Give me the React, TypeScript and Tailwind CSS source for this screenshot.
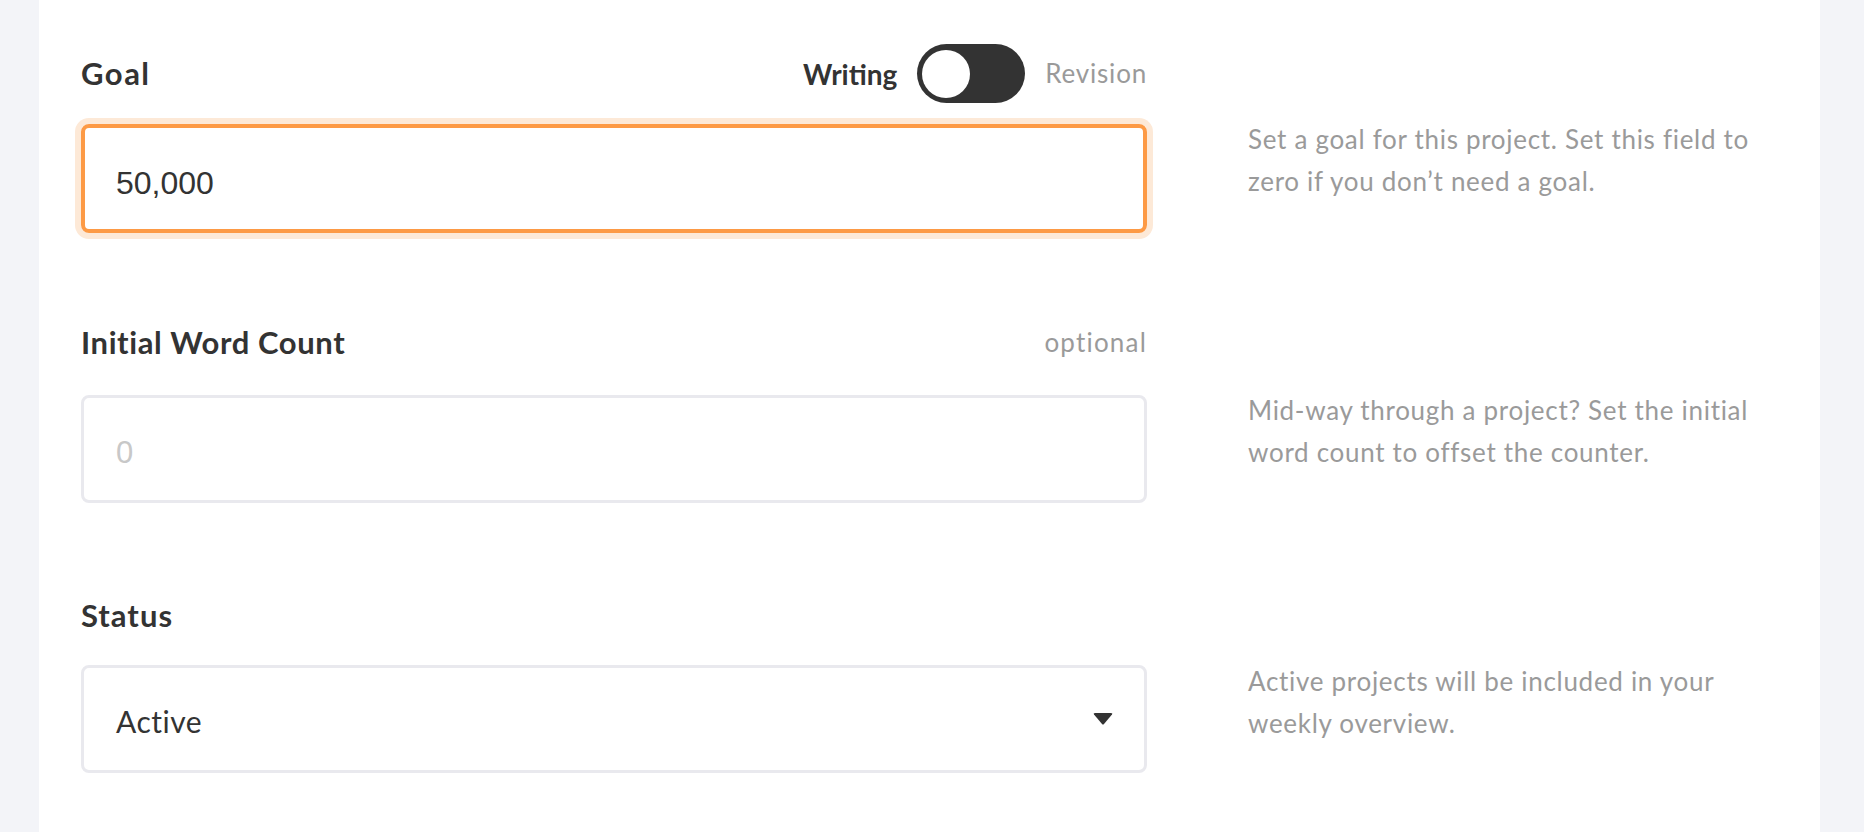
export default function App() {
  return (
    <div className="min-h-screen bg-[#f3f4f8] font-[family-name:Lato,sans-serif] text-[#333333]">
      <div className="ml-[39px] w-[1781px] min-h-[832px] bg-white pl-[42px] pr-[42px] pt-[44px] pb-[60px]">
        {/* Goal */}
        <div className="flex">
          <div className="w-[1066px]">
            <div className="flex h-[59px] items-center justify-between">
              <span className="text-[31px] font-bold tracking-[1.5px]">Goal</span>
              <div className="flex items-center gap-[20px]">
                <span className="text-[28px] font-bold">Writing</span>
                <button className="flex h-[59px] w-[108px] items-center rounded-full bg-[#333333] px-[5px]">
                  <span className="h-[48px] w-[48px] rounded-full bg-white" />
                </button>
                <span className="text-[26px] tracking-[0.8px] text-[#9a9a9a]">Revision</span>
              </div>
            </div>
            <div className="mt-[21px] flex h-[109px] items-center rounded-[8px] border-[4px] border-[#fd9a45] pl-[31px] pt-[8px] ring-[6px] ring-[#fde9d7]">
              <span className="font-[family-name:'Liberation_Sans',Arial,sans-serif] text-[32px] text-[#333333]">50,000</span>
            </div>
          </div>
          <p className="ml-[101px] w-[530px] pt-[74px] text-[26px] leading-[42px] tracking-[0.7px] text-[#9a9a9a]">
            Set a goal for this project. Set this field to zero if you don’t need a goal.
          </p>
        </div>

        {/* Initial Word Count */}
        <div className="mt-[80px] flex">
          <div className="w-[1066px]">
            <div className="flex h-[59px] items-center justify-between">
              <span className="text-[31px] font-bold tracking-[0.6px]">Initial Word Count</span>
              <span className="text-[26px] tracking-[1.2px] text-[#9a9a9a]">optional</span>
            </div>
            <div className="mt-[23px] flex h-[108px] items-center rounded-[8px] border-[3px] border-[#e9e9ee] pl-[32px] pt-[8px]">
              <span className="font-[family-name:'Liberation_Sans',Arial,sans-serif] text-[31px] text-[#c8c8c8]">0</span>
            </div>
          </div>
          <p className="ml-[101px] w-[530px] pt-[76px] text-[26px] leading-[42px] tracking-[0.7px] text-[#9a9a9a]">
            Mid-way through a project? Set the initial word count to offset the counter.
          </p>
        </div>

        {/* Status */}
        <div className="mt-[83px] flex">
          <div className="w-[1066px]">
            <div className="flex h-[59px] items-center">
              <span className="text-[31px] font-bold tracking-[1px]">Status</span>
            </div>
            <div className="mt-[20px] flex h-[108px] items-center justify-between rounded-[8px] border-[3px] border-[#e9e9ee] pl-[32px] pr-[31px] pt-[4px]">
              <span className="text-[30px] tracking-[0.5px] text-[#333333]">Active</span>
              <svg width="20" height="12" viewBox="0 0 20 12" className="-mt-[4px]">
                <path d="M1 1.5 Q0 0 2 0 H18 Q20 0 19 1.5 L11 11 Q10 12 9 11 Z" fill="#333333" />
              </svg>
            </div>
          </div>
          <p className="ml-[101px] w-[530px] pt-[74px] text-[26px] leading-[42px] tracking-[0.7px] text-[#9a9a9a]">
            Active projects will be included in your weekly overview.
          </p>
        </div>
      </div>
    </div>
  );
}
